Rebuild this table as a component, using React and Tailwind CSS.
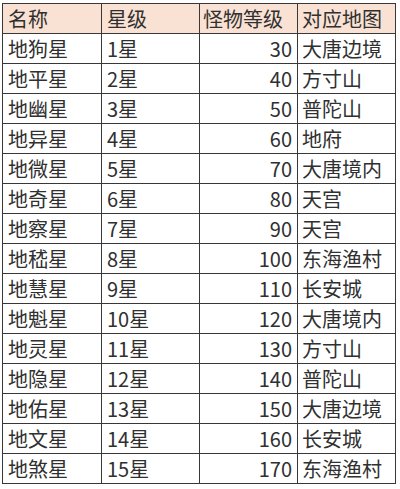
import React from "react";

const rows = [
  ["地狗星", "1星", "30", "大唐边境"],
  ["地平星", "2星", "40", "方寸山"],
  ["地幽星", "3星", "50", "普陀山"],
  ["地异星", "4星", "60", "地府"],
  ["地微星", "5星", "70", "大唐境内"],
  ["地奇星", "6星", "80", "天宫"],
  ["地察星", "7星", "90", "天宫"],
  ["地嵇星", "8星", "100", "东海渔村"],
  ["地慧星", "9星", "110", "长安城"],
  ["地魁星", "10星", "120", "大唐境内"],
  ["地灵星", "11星", "130", "方寸山"],
  ["地隐星", "12星", "140", "普陀山"],
  ["地佑星", "13星", "150", "大唐边境"],
  ["地文星", "14星", "160", "长安城"],
  ["地煞星", "15星", "170", "东海渔村"],
];

export default function App() {
  return (
    <div
      className="w-[400px] h-[489px] bg-white pt-[3px] pl-[2px] text-[#303030]"
      style={{ fontFamily: '"Noto Sans CJK SC", "Noto Sans", sans-serif' }}
    >
      <table className="border-collapse table-fixed w-[393px] text-[20px] leading-none">
        <colgroup>
          <col className="w-[99px]" />
          <col className="w-[98px]" />
          <col className="w-[98px]" />
          <col className="w-[98px]" />
        </colgroup>
        <thead>
          <tr className="h-[30px] bg-[#f9e2d3]">
            <th className="border border-[#383838] px-[5px] text-left font-normal">名称</th>
            <th className="border border-[#383838] px-[5px] text-left font-normal">星级</th>
            <th className="border border-[#383838] px-[3px] text-left font-normal">怪物等级</th>
            <th className="border border-[#383838] px-[4px] text-left font-normal">对应地图</th>
          </tr>
        </thead>
        <tbody>
          {rows.map((r) => (
            <tr key={r[0]} className="h-[30px]">
              <td className="border border-[#383838] px-[5px] text-left">{r[0]}</td>
              <td className="border border-[#383838] px-[5px] text-left">{r[1]}</td>
              <td className="border border-[#383838] px-[5px] text-right">{r[2]}</td>
              <td className="border border-[#383838] px-[4px] text-left whitespace-nowrap">{r[3]}</td>
            </tr>
          ))}
        </tbody>
      </table>
    </div>
  );
}
